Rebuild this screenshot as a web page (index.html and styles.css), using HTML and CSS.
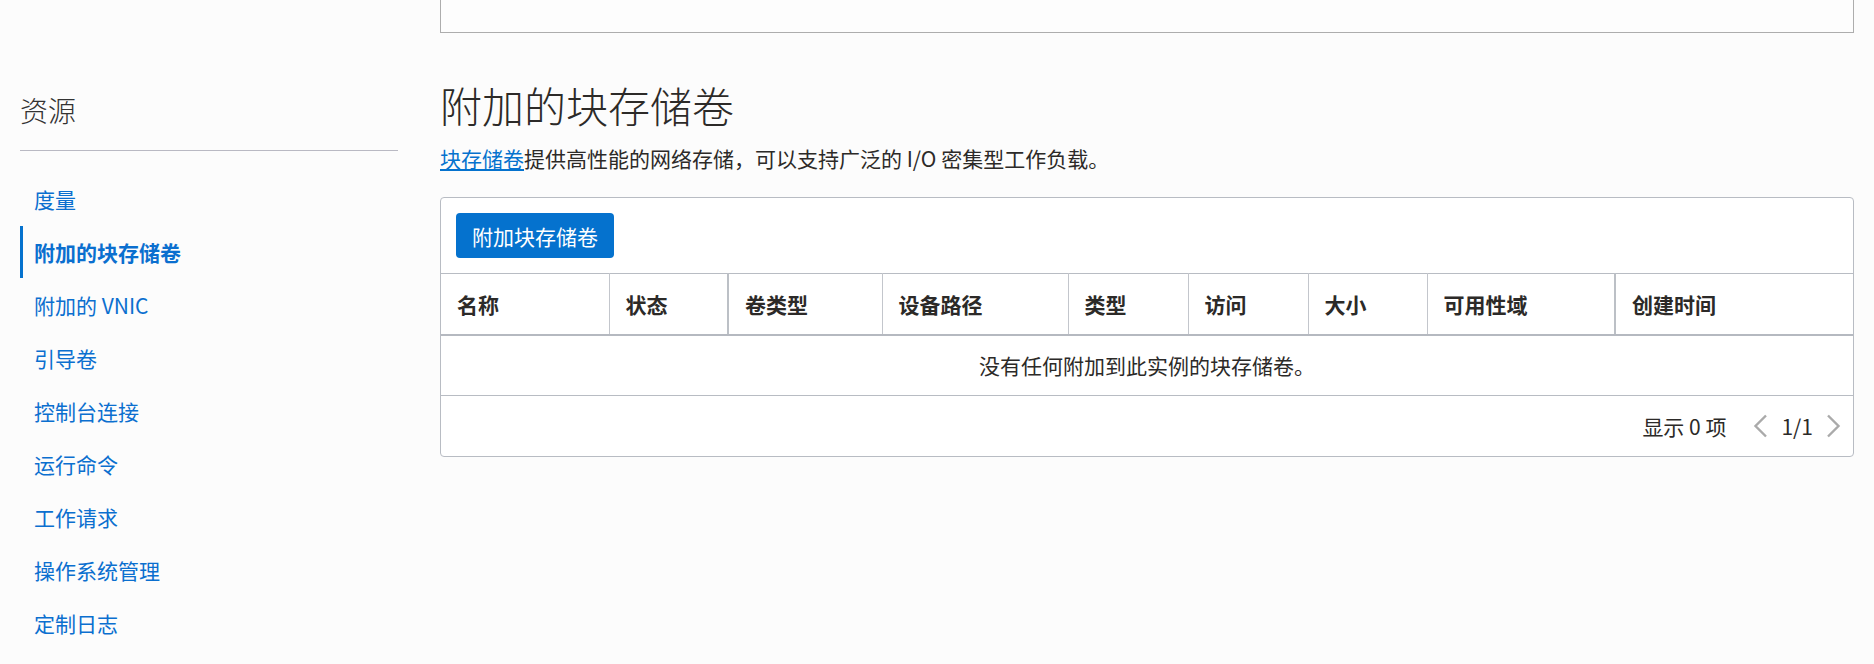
FILE: index.html
```html
<!DOCTYPE html>
<html lang="zh-CN">
<head>
<meta charset="utf-8">
<title>附加的块存储卷</title>
<link rel="stylesheet" href="styles.css">
</head>
<body>
<div class="page">
  <aside class="sidebar">
    <h2 class="side-title">资源</h2>
    <nav class="side-nav">
      <a class="nav-item">度量</a>
      <a class="nav-item active">附加的块存储卷</a>
      <a class="nav-item">附加的 VNIC</a>
      <a class="nav-item">引导卷</a>
      <a class="nav-item">控制台连接</a>
      <a class="nav-item">运行命令</a>
      <a class="nav-item">工作请求</a>
      <a class="nav-item">操作系统管理</a>
      <a class="nav-item">定制日志</a>
    </nav>
  </aside>
  <main class="main">
    <div class="top-box"></div>
    <h1 class="title">附加的块存储卷</h1>
    <p class="desc"><a class="link">块存储卷</a>提供高性能的网络存储，可以支持广泛的 I/O 密集型工作负载。</p>
    <section class="card">
      <div class="toolbar">
        <button class="btn-primary">附加块存储卷</button>
      </div>
      <table class="grid">
        <colgroup>
          <col class="c1"><col class="c2"><col class="c3"><col class="c4"><col class="c5"><col class="c6"><col class="c7"><col class="c8"><col class="c9">
        </colgroup>
        <thead>
          <tr>
            <th>名称</th>
            <th class="thick">状态</th>
            <th>卷类型</th>
            <th>设备路径</th>
            <th>类型</th>
            <th>访问</th>
            <th>大小</th>
            <th class="thick">可用性域</th>
            <th class="last">创建时间</th>
          </tr>
        </thead>
        <tbody>
          <tr>
            <td class="empty" colspan="9">没有任何附加到此实例的块存储卷。</td>
          </tr>
        </tbody>
      </table>
      <div class="footer">
        <span class="count">显示 0 项</span>
        <span class="pager">
          <svg class="chev" width="15" height="24" viewBox="0 0 15 24"><polyline points="13,1.5 2.5,12 13,22.5" fill="none" stroke="#aaaaaa" stroke-width="2.4"/></svg>
          <span class="pages">1/1</span>
          <svg class="chev" width="15" height="24" viewBox="0 0 15 24"><polyline points="2,1.5 12.5,12 2,22.5" fill="none" stroke="#aaaaaa" stroke-width="2.4"/></svg>
        </span>
      </div>
    </section>
  </main>
</div>
</body>
</html>
```

FILE: styles.css
```css
* { box-sizing: border-box; }

html, body {
  margin: 0;
  padding: 0;
  background: #fcfcfc;
  font-family: "Noto Sans CJK SC", "Noto Sans", sans-serif;
  color: #2c2a28;
}

.page {
  display: flex;
  align-items: flex-start;
  padding: 0 20px;
}

.sidebar {
  width: 378px;
  flex: 0 0 378px;
  padding-top: 90px;
}

.side-title {
  margin: 0;
  font-size: 28px;
  line-height: 40px;
  font-weight: 300;
  color: #333;
  padding-bottom: 20px;
  border-bottom: 1px solid #b9b9c3;
}

.side-nav {
  display: flex;
  flex-direction: column;
  padding-top: 22px;
}

.nav-item {
  display: block;
  height: 53px;
  line-height: 53px;
  font-size: 21px;
  color: #0b6fcf;
  padding-left: 11px;
  border-left: 3px solid transparent;
}

.nav-item.active {
  border-left-color: #0572ce;
  font-weight: 700;
  height: 52px;
  line-height: 52px;
  margin-bottom: 1px;
}

.main {
  flex: 1;
  margin-left: 42px;
  min-width: 0;
}

.top-box {
  height: 33px;
  border: 1px solid #adadad;
  border-top: none;
  background: #fdfdfd;
}

.title {
  margin: 46px 0 0;
  font-size: 42px;
  line-height: 52px;
  font-weight: 300;
  color: #2c2a28;
}

.desc {
  margin: 13px 0 0;
  font-size: 21px;
  line-height: 28px;
  color: #2c2a28;
}

.link {
  color: #0572ce;
  text-decoration: underline;
}

.card {
  margin-top: 25px;
  background: #fff;
  border: 1px solid #b8bcc3;
  border-radius: 4px;
}

.toolbar {
  padding: 15px 15px 15px;
}

.btn-primary {
  display: block;
  height: 45px;
  padding: 0 16px;
  border: none;
  border-radius: 4px;
  background: #0572ce;
  color: #fff;
  font-family: inherit;
  font-size: 21px;
}

.grid {
  width: 100%;
  border-collapse: collapse;
  table-layout: fixed;
}

.c1 { width: 168px; }
.c2 { width: 119px; }
.c3 { width: 154px; }
.c4 { width: 186px; }
.c5 { width: 120px; }
.c6 { width: 120px; }
.c7 { width: 119px; }
.c8 { width: 188px; }
.c9 { width: auto; }

.grid th {
  height: 61px;
  padding: 0 16px;
  text-align: left;
  font-size: 21px;
  font-weight: 700;
  color: #2c2a28;
  border-top: 1px solid #b8bcc3;
  border-bottom: 2px solid #b5b9c0;
  border-right: 1px solid #c3c6cc;
}

.grid th.thick {
  border-right: 2px solid #bcc0c6;
}

.grid th.last {
  border-right: none;
}

.grid td.empty {
  height: 61px;
  text-align: center;
  font-size: 21px;
  color: #2c2a28;
  border-bottom: 1px solid #b8bcc3;
}

.footer {
  height: 60px;
  display: flex;
  align-items: center;
  justify-content: flex-end;
  padding-right: 12px;
  font-size: 21px;
}

.count {
  margin-right: 27px;
}

.pager {
  display: flex;
  align-items: center;
  gap: 13px;
}

.chev {
  display: block;
}
```
